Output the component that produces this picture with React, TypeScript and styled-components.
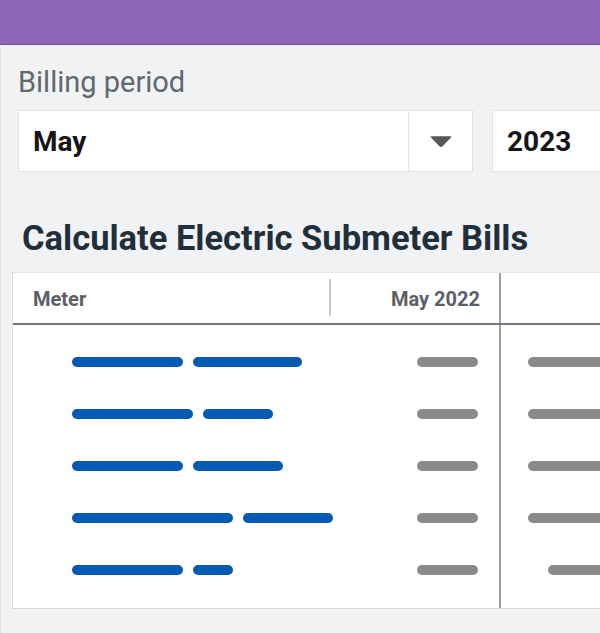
import * as React from 'react';
import styled, { createGlobalStyle } from 'styled-components';

const GlobalStyle = createGlobalStyle`
  html, body {
    margin: 0;
    padding: 0;
    background: #eef0f2;
    overflow: hidden;
    font-family: Roboto, "Liberation Sans", Arial, sans-serif;
  }
`;

const TopBar = styled.div`
  height: 44px;
  background: #8f66b5;
  border-bottom: 1px solid #6e4f93;
`;

const Panel = styled.div`
  margin-top: 2px;
  height: 586px;
  background: #f1f2f4;
  border-left: 1px solid #dcdee1;
  padding: 19px 0 0 17px;
  box-sizing: border-box;
  width: 760px;
`;

const Label = styled.div`
  font-size: 29px;
  line-height: 32px;
  color: #62676c;
`;

const Fields = styled.div`
  display: flex;
  gap: 19px;
  margin-top: 12px;
`;

const SelectBox = styled.div<{ $width: number }>`
  display: flex;
  align-items: stretch;
  width: ${(p) => p.$width}px;
  height: 62px;
  box-sizing: border-box;
  background: #fff;
  border: 1px solid #dfe1e4;
`;

const SelectValue = styled.div`
  flex: 1;
  display: flex;
  align-items: center;
  padding-left: 14px;
  font-size: 28px;
  font-weight: 700;
  color: #151515;
`;

const Caret = styled.div`
  width: 63px;
  border-left: 1px solid #dfe1e4;
  display: flex;
  align-items: center;
  justify-content: center;
`;

const Title = styled.h2`
  margin: 46px 0 0 4px;
  font-size: 34.5px;
  line-height: 40px;
  font-weight: 700;
  color: #1f2f3b;
`;

const Table = styled.div`
  margin: 14px 0 0 -6px;
  width: 720px;
  background: #fff;
  border: 1px solid #d9dbde;
  border-top-color: #e4e6e8;
`;

const HeaderRow = styled.div`
  display: grid;
  grid-template-columns: 316px 172px 1fr;
  height: 50px;
  border-bottom: 2px solid #737a81;
`;

const HeadCell = styled.div<{ $right?: boolean; $divider?: boolean }>`
  display: flex;
  align-items: center;
  justify-content: ${(p) => (p.$right ? 'flex-end' : 'flex-start')};
  padding: ${(p) => (p.$right ? '2px 19px 0 0' : '2px 0 0 20px')};
  font-size: 20px;
  font-weight: 700;
  color: #5a6066;
  position: relative;
  border-right: ${(p) => (p.$divider ? '2px solid #9aa0a6' : 'none')};
  &::before {
    content: '';
    display: ${(p) => (p.$right ? 'block' : 'none')};
    position: absolute;
    left: 0;
    top: 6px;
    bottom: 7px;
    width: 2px;
    background: #c3c7cb;
  }
`;

const Body = styled.div`
  display: grid;
  grid-template-columns: 488px 1fr;
`;

const Column = styled.div<{ $divider?: boolean }>`
  display: flex;
  flex-direction: column;
  padding: 11px 0 12px;
  border-right: ${(p) => (p.$divider ? '2px solid #9aa0a6' : 'none')};
`;

const Row = styled.div<{ $indent: number; $right?: boolean }>`
  height: 52px;
  display: flex;
  align-items: center;
  gap: 10px;
  min-width: 0;
  justify-content: ${(p) => (p.$right ? 'flex-end' : 'flex-start')};
  padding: ${(p) => (p.$right ? `0 ${p.$indent}px 0 0` : `0 0 0 ${p.$indent}px`)};
`;

const Bar = styled.div<{ $w: number; $tone: 'blue' | 'gray' }>`
  width: ${(p) => p.$w}px;
  height: 10px;
  border-radius: 5px;
  background: ${(p) => (p.$tone === 'blue' ? '#0459b3' : '#888a8c')};
  flex: none;
`;

const RowPair = styled.div`
  display: grid;
  grid-template-columns: minmax(0, 1fr) 172px;
`;

const meters: [number, number][] = [
  [111, 109],
  [121, 70],
  [111, 90],
  [161, 90],
  [111, 40],
];

const nextCol = [121, 121, 121, 121, 101];

export default function App() {
  return (
    <>
      <GlobalStyle />
      <TopBar />
      <Panel>
        <Label>Billing period</Label>
        <Fields>
          <SelectBox $width={455}>
            <SelectValue>May</SelectValue>
            <Caret>
              <svg width="22" height="11" viewBox="0 0 22 11">
                <path d="M1.5 1 L20.5 1 L12 9.6 Q11 10.6 10 9.6 Z" fill="#555759" stroke="#555759" strokeWidth="1.5" strokeLinejoin="round" />
              </svg>
            </Caret>
          </SelectBox>
          <SelectBox $width={160}>
            <SelectValue>2023</SelectValue>
          </SelectBox>
        </Fields>
        <Title>Calculate Electric Submeter Bills</Title>
        <Table>
          <HeaderRow>
            <HeadCell>Meter</HeadCell>
            <HeadCell $right $divider>May 2022</HeadCell>
            <HeadCell />
          </HeaderRow>
          <Body>
            <Column $divider>
              {meters.map(([a, b], i) => (
                <RowPair key={i}>
                  <Row $indent={59}>
                    <Bar $w={a} $tone="blue" />
                    <Bar $w={b} $tone="blue" />
                  </Row>
                  <Row $indent={21} $right>
                    <Bar $w={61} $tone="gray" />
                  </Row>
                </RowPair>
              ))}
            </Column>
            <Column>
              {nextCol.map((w, i) => (
                <Row key={i} $indent={0}>
                  <Bar $w={w} $tone="gray" style={{ marginLeft: 148 - w }} />
                </Row>
              ))}
            </Column>
          </Body>
        </Table>
      </Panel>
    </>
  );
}
